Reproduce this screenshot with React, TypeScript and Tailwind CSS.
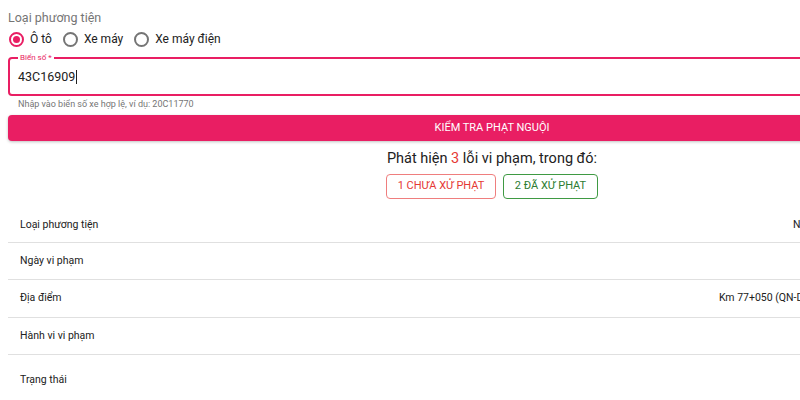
const rows = [
  { label: "Loại phương tiện", value: "Nền mầu trắng, chữ và số mầu đen ô" },
  { label: "Ngày vi phạm", value: "10:09, 20/05/2023" },
  { label: "Địa điểm", value: "Km 77+050 (QN-DN), Huyện Thăng Bình, Quảng Nam" },
  { label: "Hành vi vi phạm", value: "Chạy quá tốc độ" },
  { label: "Trạng thái", value: "Chưa xử phạt" },
];

function Radio({ label, checked = false }: { label: string; checked?: boolean }) {
  return (
    <label className="flex items-center gap-[6px] mr-[11px]">
      <span
        className={
          checked
            ? "w-[15px] h-[15px] rounded-full border-2 border-[#e91e63] flex items-center justify-center"
            : "w-[15px] h-[15px] rounded-full border-2 border-[#757575]"
        }
      >
        {checked && <span className="w-[7px] h-[7px] rounded-full bg-[#e91e63]" />}
      </span>
      <span className="text-[12px] text-[#212121]">{label}</span>
    </label>
  );
}

export default function App() {
  return (
    <div className="w-[800px] h-[400px] overflow-hidden bg-white" style={{ fontFamily: "Roboto, 'Liberation Sans', sans-serif" }}>
      <div className="w-[984px] px-2 pt-[10px]">
        <p className="text-[12.5px] text-[#757575] leading-[16px]">Loại phương tiện</p>
        <div className="flex items-center pl-[1px] h-[26px]">
          <Radio label="Ô tô" checked />
          <Radio label="Xe máy" />
          <Radio label="Xe máy điện" />
        </div>

        <fieldset className="mt-[2px] h-[42px] border-2 border-[#e91e63] rounded-[4px] pl-[8px] pr-2 m-0">
          <legend className="px-[2px] text-[8px] leading-[8px] text-[#e91e63]">Biển số *</legend>
          <div className="flex items-center text-[12.5px] text-[#212121] h-[30px]">
            43C16909<span className="w-px h-[14px] bg-[#212121] ml-[1px]" />
          </div>
        </fieldset>
        <p className="text-[9px] text-[#757575] pl-[10px] mt-[2px] leading-[12px]">Nhập vào biển số xe hợp lệ, ví dụ: 20C11770</p>

        <button className="mt-[5px] w-full h-[26px] bg-[#e91e63] rounded-[4px] text-white text-[11px] uppercase shadow-[0_1px_3px_rgba(0,0,0,0.25)]">
          Kiểm tra phạt nguội
        </button>

        <p className="text-center text-[14.5px] text-[#212121] mt-[8px] leading-[20px]">
          Phát hiện <span className="text-[#e53935]">3</span> lỗi vi phạm, trong đó:
        </p>
        <div className="flex justify-center gap-[7px] mt-[5px]">
          <button className="w-[110px] h-[25px] border border-[#ef7e7e] rounded-[4px] text-[11px] text-[#e53935]">1 CHƯA XỬ PHẠT</button>
          <button className="w-[95px] h-[25px] border border-[#3f9a43] rounded-[4px] text-[11px] text-[#2e7d32]">2 ĐÃ XỬ PHẠT</button>
        </div>

        <div className="mt-[6px]">
          {rows.map((r, i) => (
            <div
              key={r.label}
              className={
                i < rows.length - 1
                  ? "flex items-center justify-between h-[37.5px] px-3 border-b border-[#e0e0e0] text-[10.5px] text-[#212121]"
                  : "flex items-center justify-between h-[50px] px-3 text-[10.5px] text-[#212121]"
              }
            >
              <span className={i === 0 ? "pt-[3px]" : ""}>{r.label}</span>
              <span className={i === 0 ? "pt-[3px]" : ""}>{r.value}</span>
            </div>
          ))}
        </div>
      </div>
    </div>
  );
}
